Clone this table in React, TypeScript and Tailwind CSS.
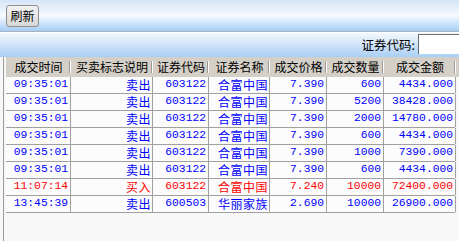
import React from 'react';

interface Trade {
  time: string;
  side: string;
  code: string;
  name: string;
  price: string;
  qty: string;
  amount: string;
  buy?: boolean;
}

const trades: Trade[] = [
  { time: '09:35:01', side: '卖出', code: '603122', name: '合富中国', price: '7.390', qty: '600', amount: '4434.000' },
  { time: '09:35:01', side: '卖出', code: '603122', name: '合富中国', price: '7.390', qty: '5200', amount: '38428.000' },
  { time: '09:35:01', side: '卖出', code: '603122', name: '合富中国', price: '7.390', qty: '2000', amount: '14780.000' },
  { time: '09:35:01', side: '卖出', code: '603122', name: '合富中国', price: '7.390', qty: '600', amount: '4434.000' },
  { time: '09:35:01', side: '卖出', code: '603122', name: '合富中国', price: '7.390', qty: '1000', amount: '7390.000' },
  { time: '09:35:01', side: '卖出', code: '603122', name: '合富中国', price: '7.390', qty: '600', amount: '4434.000' },
  { time: '11:07:14', side: '买入', code: '603122', name: '合富中国', price: '7.240', qty: '10000', amount: '72400.000', buy: true },
  { time: '13:45:39', side: '卖出', code: '600503', name: '华丽家族', price: '2.690', qty: '10000', amount: '26900.000' },
];

const headers = ['成交时间', '买卖标志说明', '证券代码', '证券名称', '成交价格', '成交数量', '成交金额'];

const cols = 'grid grid-cols-[65px_82px_56px_61px_57px_57px_72px]';
const num = "flex items-center justify-end border-r border-[#a0a0a0] pr-[2px] [font-family:'Liberation_Mono',monospace] text-[11.3px] leading-none whitespace-nowrap";
const cjk = 'flex items-center justify-end border-r border-[#a0a0a0] pr-[1px] text-[12px] tracking-[0.5px] leading-none whitespace-nowrap';

export default function App() {
  return (
    <div className="w-[459px] h-[241px] overflow-hidden bg-[#f8f8f8] flex flex-col [font-family:'Noto_Sans_CJK_SC',sans-serif] text-[12px] text-black">
      {/* toolbar */}
      <div className="h-[31px] shrink-0 bg-gradient-to-b from-[#d4e5f7] via-[#f7fafe] to-[#a6cdf5] px-[6px] pt-[5px]">
        <button className="h-[22px] w-[33px] rounded-[3px] border border-[#8e8f8f] bg-gradient-to-b from-[#f2f2f2] to-[#d8d8d8] text-[12px] leading-[18px] text-black">
          刷新
        </button>
      </div>
      <div className="h-px shrink-0 bg-[#a8b4c2]" />
      <div className="h-px shrink-0 bg-white" />

      {/* search bar */}
      <div className="h-[24px] shrink-0 bg-gradient-to-b from-[#f4f8fd] via-[#cfe3f8] to-[#a9cff6] flex items-center justify-end">
        <span className="mr-[3px] text-[12.5px] leading-none">证券代码:</span>
        <div className="h-[20px] w-[42px] -mr-[1px] mt-[-2px] bg-white border-t border-l border-[#6b6b6b]" />
      </div>

      {/* table */}
      <div className="flex-1 flex border-l border-[#9a9a9a] ml-[3px] pl-[2px]">
        <div className="flex-1 flex flex-col">
          <div className="h-[20px] bg-[#d4d0c8] flex">
            <div className={cols}>
              {headers.map((h) => (
                <div key={h} className="relative flex items-center justify-center text-[12px] leading-none whitespace-nowrap">
                  {h}
                  <span className="absolute right-0 top-[4px] h-[12px] w-[2px] border-l border-[#9d9a95] border-r border-r-white" />
                </div>
              ))}
            </div>
          </div>
          {trades.map((t, i) => (
            <div
              key={i}
              className={`${cols} h-[17px] w-[449px] border-b border-[#a0a0a0] bg-[#fcfcfc] ${t.buy ? 'text-[#ff0000]' : 'text-[#0000ff]'}`}
            >
              <div className={num}>{t.time}</div>
              <div className={cjk}>{t.side}</div>
              <div className={num}>{t.code}</div>
              <div className={cjk}>{t.name}</div>
              <div className={num}>{t.price}</div>
              <div className={num}>{t.qty}</div>
              <div className={num}>{t.amount}</div>
            </div>
          ))}
        </div>
      </div>
    </div>
  );
}
